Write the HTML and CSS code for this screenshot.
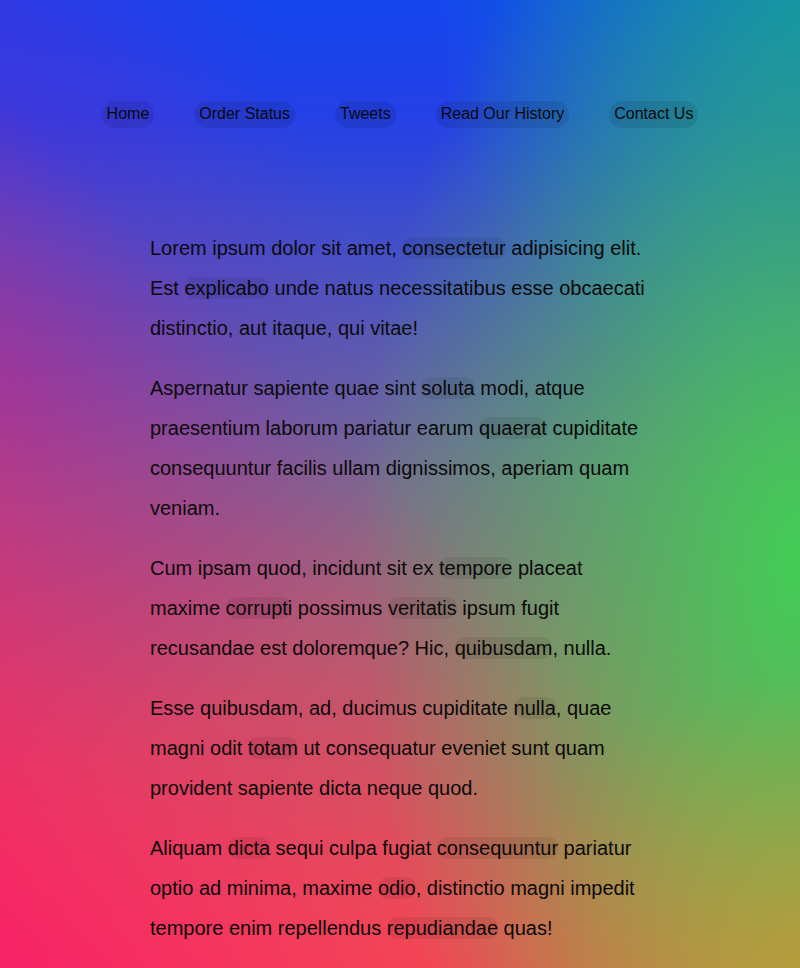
FILE: index.html
```html
<!DOCTYPE html>
<html lang="en">
<head>
<meta charset="utf-8">
<title>Gradient page</title>
<link rel="stylesheet" href="styles.css">
</head>
<body>
<header class="site-header">
  <nav class="nav">
    <a class="nav-link" href="#">Home</a>
    <a class="nav-link" href="#">Order Status</a>
    <a class="nav-link" href="#">Tweets</a>
    <a class="nav-link" href="#">Read Our History</a>
    <a class="nav-link" href="#">Contact Us</a>
  </nav>
</header>
<main class="content">
  <p>Lorem ipsum dolor sit amet, <span class="hl">consectetur</span> adipisicing elit. Est <span class="hl">explicabo</span> unde natus necessitatibus esse obcaecati distinctio, aut itaque, qui vitae!</p>
  <p>Aspernatur sapiente quae sint <span class="hl">soluta</span> modi, atque praesentium laborum pariatur earum <span class="hl">quaerat</span> cupiditate consequuntur facilis ullam dignissimos, aperiam quam veniam.</p>
  <p>Cum ipsam quod, incidunt sit ex <span class="hl">tempore</span> placeat maxime <span class="hl">corrupti</span> possimus <span class="hl">veritatis</span> ipsum fugit recusandae est doloremque? Hic, <span class="hl">quibusdam</span>, nulla.</p>
  <p>Esse quibusdam, ad, ducimus cupiditate <span class="hl">nulla</span>, quae magni odit <span class="hl">totam</span> ut consequatur eveniet sunt quam provident sapiente dicta neque quod.</p>
  <p>Aliquam <span class="hl">dicta</span> sequi culpa fugiat <span class="hl">consequuntur</span> pariatur optio ad minima, maxime <span class="hl">odio</span>, distinctio magni impedit tempore enim repellendus <span class="hl">repudiandae</span> quas!</p>
</main>
</body>
</html>
```

FILE: styles.css
```css
html, body {
  margin: 0;
  padding: 0;
}

body {
  min-height: 968px;
  font-family: "Liberation Sans", Arial, sans-serif;
  color: #0a0a0a;
  background-color: #7a6a90;
  background-image:
    radial-gradient(ellipse 40% 30% at 100% 100%, rgba(200, 160, 50, 0.6), rgba(200, 160, 50, 0) 100%),
    radial-gradient(ellipse 55% 80% at 100% 58%, rgba(66, 205, 85, 1), rgba(66, 205, 85, 0) 100%),
    radial-gradient(ellipse 45% 45% at 100% 0%, rgba(0, 150, 175, 0.75), rgba(0, 150, 175, 0) 100%),
    linear-gradient(45deg, rgba(248, 34, 104, 1) 0%, rgba(248, 34, 104, 0) 50%),
    radial-gradient(ellipse 50% 40% at 0% 40%, rgba(125, 45, 185, 0.6), rgba(125, 45, 185, 0) 100%),
    radial-gradient(ellipse 35% 25% at 0% 0%, rgba(80, 40, 215, 0.45), rgba(80, 40, 215, 0) 100%),
    linear-gradient(180deg, #1446ee 0%, #2440e6 12%, #7a6a90 50%, #f06a40 100%);
  background-repeat: no-repeat;
  background-size: 100% 968px;
}

.site-header {
  padding-top: 101px;
}

.nav {
  display: flex;
  justify-content: center;
  gap: 40px;
}

.nav-link {
  display: block;
  padding: 4px 5px 5px;
  border-radius: 14px;
  background: rgba(0, 0, 0, 0.09);
  color: #0a0a0a;
  text-decoration: none;
  font-size: 16px;
  line-height: 18px;
}

.content {
  max-width: 500px;
  margin: 100px auto 0;
}

.content p {
  margin: 0 0 20px;
  font-size: 20px;
  line-height: 40px;
}

.hl {
  background: rgba(0, 0, 0, 0.07);
  border-radius: 10px;
}
```
